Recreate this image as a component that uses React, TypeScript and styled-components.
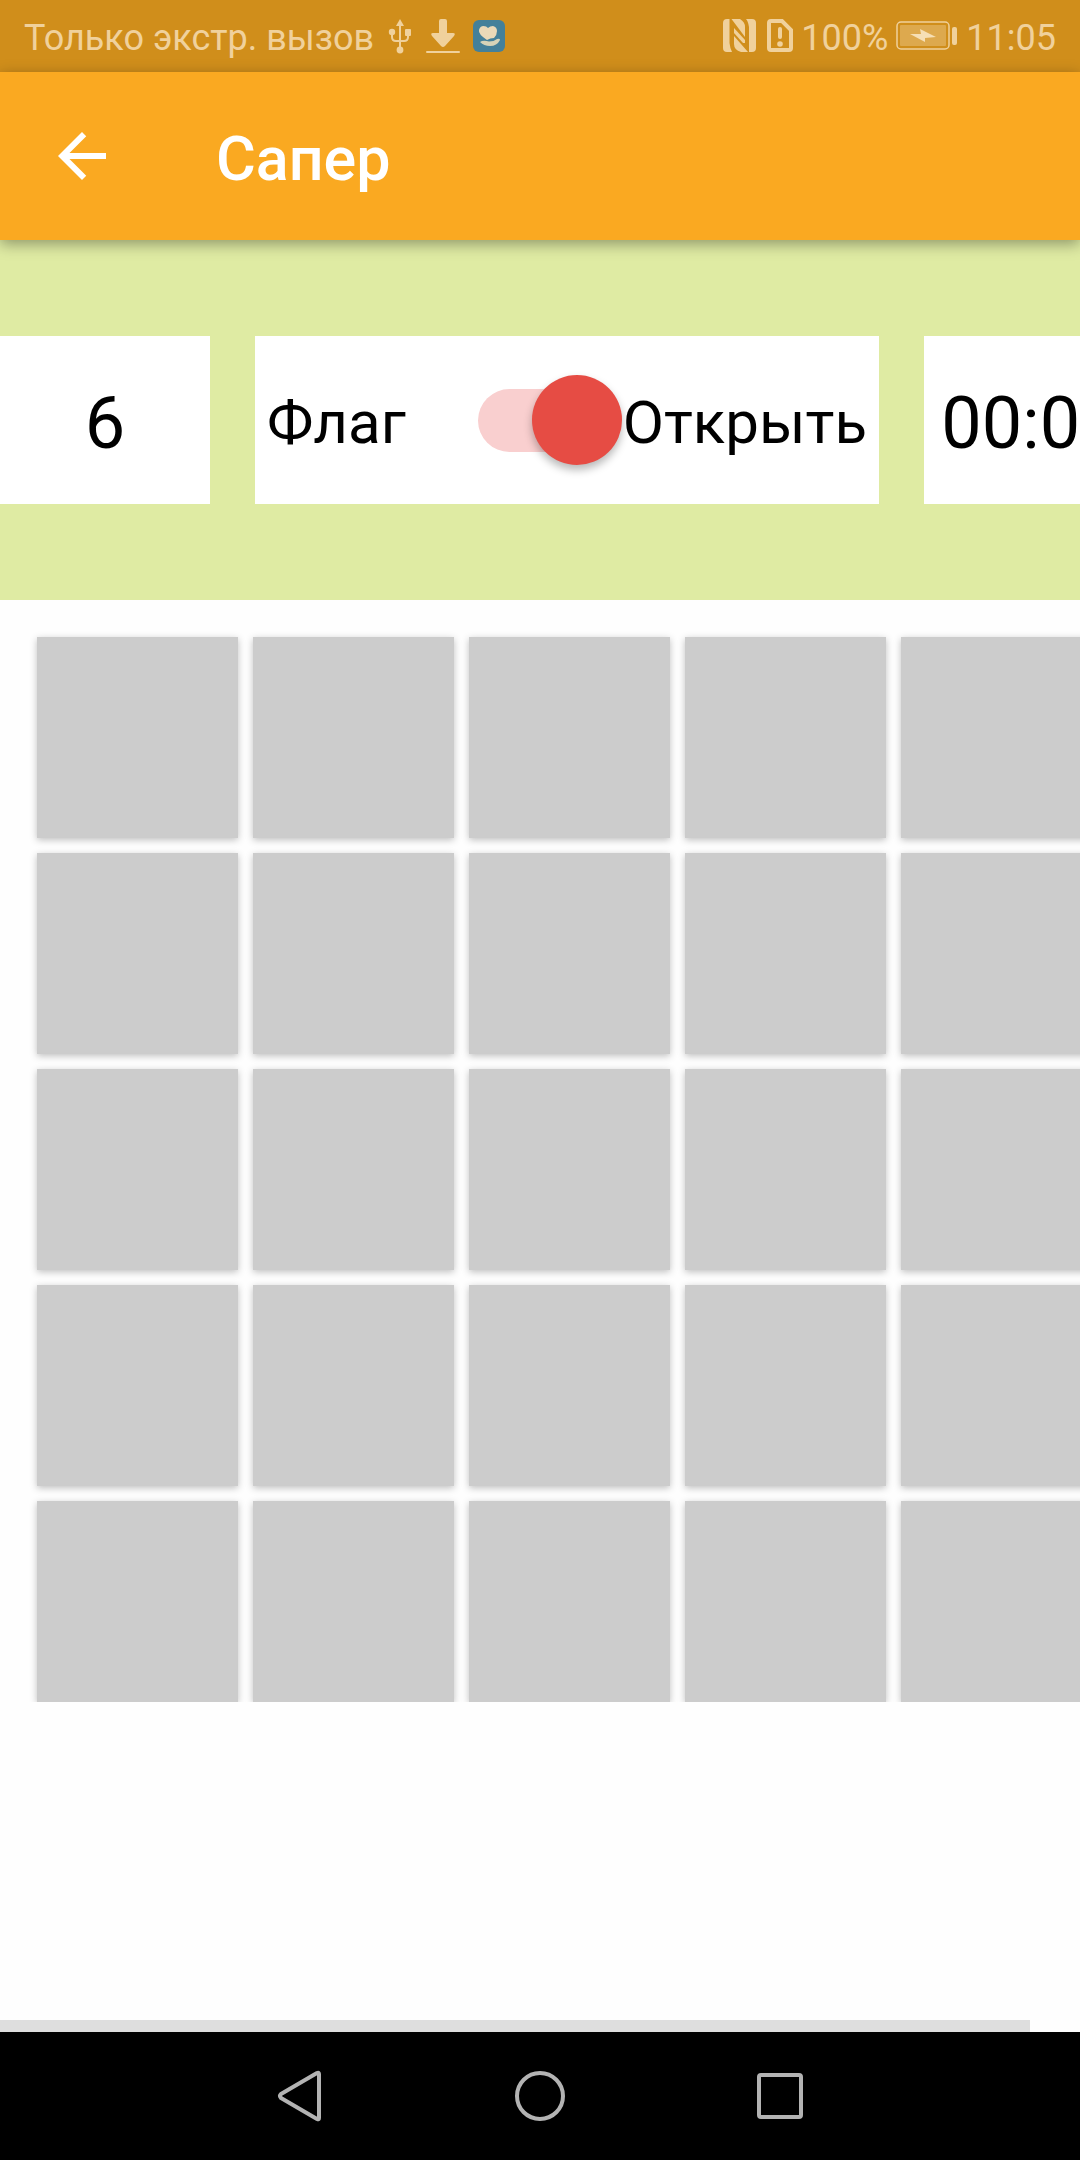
import React, { useState } from "react";
import styled, { createGlobalStyle } from "styled-components";

const GlobalStyle = createGlobalStyle`
  *, *::before { box-sizing: border-box; }
  body {
    margin: 0;
    background: #fefefe;
    font-family: Roboto, "Noto Sans", sans-serif;
    color: #000;
  }
  button { border: 0; padding: 0; background: none; font: inherit; color: inherit; }
`;

const Screen = styled.div`
  display: flex;
  flex-direction: column;
  min-height: 100vh;
  overflow: hidden;
`;

const StatusBar = styled.div`
  display: flex;
  justify-content: space-between;
  align-items: center;
  height: 72px;
  padding: 0 24px;
  background: #d08e1b;
  color: #f0d19c;
  font-size: 36px;
  line-height: 42px;
  white-space: nowrap;
`;

const StatusGroup = styled.div<{ $gap: number }>`
  display: flex;
  align-items: center;
  gap: ${(p) => p.$gap}px;
`;

const StatusText = styled.span`
  padding-top: 3px;
`;

const StatusIcon = styled.svg`
  display: block;
  flex: none;
`;

const AppBar = styled.header`
  position: relative;
  display: flex;
  align-items: center;
  gap: 98px;
  height: 168px;
  padding: 0 46px;
  background: #faa921;
  color: #fff;
  box-shadow: 0 4px 14px rgba(0, 0, 0, 0.36);
`;

const BackButton = styled.button`
  width: 72px;
  height: 72px;
  svg { display: block; }
`;

const Title = styled.h1`
  margin: 0;
  padding-top: 5px;
  font-size: 61px;
  line-height: 72px;
  font-weight: 500;
`;

const Content = styled.main`
  flex: 1;
  display: flex;
  flex-direction: column;
  overflow: hidden;
`;

const InfoBar = styled.section`
  display: flex;
  gap: 45px;
  padding: 96px 0;
  background: #dfeba3;
`;

const Panel = styled.div<{ $width: number }>`
  flex: none;
  display: flex;
  align-items: center;
  width: ${(p) => p.$width}px;
  height: 168px;
  background: #fff;
  white-space: nowrap;
`;

const Counter = styled.output`
  flex: 1;
  padding-top: 8px;
  font-size: 72px;
  line-height: 84px;
  text-align: center;
`;

const ModeLabel = styled.label`
  padding: 5px 12px 0;
  font-size: 60px;
  line-height: 72px;
  input + & { padding-left: 1px; }
`;

const Switch = styled.input`
  appearance: none;
  display: flex;
  align-items: center;
  justify-content: flex-start;
  width: 144px;
  height: 63px;
  margin: 0 0 0 auto;
  border-radius: 32px;
  background: #f9cfcf;
  &::before {
    content: "";
    width: 90px;
    height: 90px;
    flex: none;
    border-radius: 50%;
    background: #e64c44;
    box-shadow: 0 5px 8px rgba(0, 0, 0, 0.28);
  }
  &:checked { justify-content: flex-end; }
`;

const Board = styled.section`
  display: grid;
  grid-template-columns: repeat(5, 201px);
  grid-auto-rows: 201px;
  gap: 15px;
  padding: 37px 37px 0;
  overflow: hidden;
`;

const Cell = styled.button`
  background: #ccc;
  box-shadow: 0 2px 7px rgba(0, 0, 0, 0.25);
`;

const ScrollThumb = styled.div`
  height: 12px;
  margin: auto 50px 0 0;
  background: #dedede;
`;

const NavBar = styled.nav`
  display: flex;
  justify-content: center;
  align-items: center;
  gap: 180px;
  height: 128px;
  background: #000;
`;

const NavButton = styled.button`
  width: 60px;
  height: 60px;
  svg {
    display: block;
    fill: none;
    stroke: #b3b3b3;
    stroke-width: 4;
    stroke-linejoin: round;
  }
`;

const UsbIcon = () => (
  <StatusIcon width="28" height="36" viewBox="-2 0 28 36" fill="currentColor">
    <path d="M12 1 16 8H8Z" />
    <circle cx="12" cy="32" r="3.4" />
    <circle cx="4" cy="14" r="3.2" />
    <rect x="17" y="11" width="6" height="7" rx="1" />
    <path d="M12 6V31M4 15V19Q4 23 8 23H16Q20 23 20 19V16" fill="none" stroke="currentColor" strokeWidth="2" />
  </StatusIcon>
);

const DownloadIcon = () => (
  <StatusIcon width="34" height="36" viewBox="0 0 34 36" fill="currentColor">
    <path d="M13 3Q13 1 15 1H19Q21 1 21 3V15H27Q30 15 28 18L19 28Q17 30 15 28L6 18Q4 15 7 15H13Z" />
    <rect x="0" y="33" width="34" height="2" rx="1" />
  </StatusIcon>
);

const CareIcon = () => (
  <StatusIcon width="34" height="36" viewBox="0 0 34 36">
    <rect x="1" y="2" width="32" height="32" rx="6" fill="#43809a" />
    <path d="M15 22Q6 16 7 12Q8 8 11.500 8Q14.500 8 16 10Q18 8 21 8Q25 9 25 13Q25 17 22 20Q18 20 15 22Z" fill="#ead9b8" />
    <path d="M8 24Q11 22 17 23.500Q22 23.500 25 21Q28 20 28 22Q25 28 18 28Q12 28 8 24Z" fill="#d6d3b8" />
  </StatusIcon>
);

const NfcIcon = () => (
  <StatusIcon width="34" height="34" viewBox="0 0 34 34" fill="currentColor">
    <path d="M6.500 0H4Q0 0 0 4V29Q0 33 4 33H9Q7 29 6.500 24Z" />
    <path d="M8.500 0H17Q22 3 22 8V18Z" />
    <path d="M11 9 22 21V24L20 24 11 14Z" />
    <path d="M11 17 25 33H18Q11 31 11 25Z" />
    <path d="M23 0H29Q33 0 33 4V29Q33 33 29 33H26V8Q25 2 23 0Z" />
  </StatusIcon>
);

const SimAlertIcon = () => (
  <StatusIcon width="28" height="34" viewBox="-2 0 28 34" fill="currentColor">
    <path d="M4 2H15L24 11V29Q24 31 22 31H4Q2 31 2 29V4Q2 2 4 2Z" fill="none" stroke="currentColor" strokeWidth="4" />
    <rect x="11" y="8" width="4" height="12" rx="2" />
    <circle cx="13" cy="25" r="2.800" />
  </StatusIcon>
);

const BatteryIcon = () => (
  <StatusIcon width="62" height="30" viewBox="0 0 62 30" fill="currentColor">
    <rect x="1" y="1" width="52" height="27" rx="4" fill="none" stroke="currentColor" strokeWidth="1.500" />
    <rect x="4" y="4" width="46" height="21" rx="1" opacity="0.4" />
    <path d="M14 13 25 13 24 8 40 16 29 17 29 21Z" fill="#f6dfb5" />
    <rect x="56" y="6" width="5" height="18" rx="2" />
  </StatusIcon>
);

export default function App() {
  const [opening, setOpening] = useState(true);

  return (
    <Screen>
      <GlobalStyle />
      <StatusBar>
        <StatusGroup $gap={12}>
          <StatusText>Только экстр. вызов</StatusText>
          <UsbIcon />
          <DownloadIcon />
          <CareIcon />
        </StatusGroup>
        <StatusGroup $gap={8}>
          <NfcIcon />
          <SimAlertIcon />
          <StatusText>100%</StatusText>
          <BatteryIcon />
          <StatusText>11:05</StatusText>
        </StatusGroup>
      </StatusBar>

      <AppBar>
        <BackButton aria-label="Назад">
          <svg width="72" height="72" viewBox="0 0 24 24" fill="currentColor">
            <path d="M20 11H7.830l5.590-5.590L12 4l-8 8 8 8 1.410-1.410L7.830 13H20v-2z" />
          </svg>
        </BackButton>
        <Title>Сапер</Title>
      </AppBar>

      <Content>
        <InfoBar>
          <Panel $width={210}>
            <Counter>6</Counter>
          </Panel>
          <Panel $width={624}>
            <ModeLabel htmlFor="mode">Флаг</ModeLabel>
            <Switch
              id="mode"
              type="checkbox"
              role="switch"
              checked={opening}
              onChange={(e) => setOpening(e.target.checked)}
            />
            <ModeLabel htmlFor="mode">Открыть</ModeLabel>
          </Panel>
          <Panel $width={214}>
            <Counter>00:00</Counter>
          </Panel>
        </InfoBar>

        <Board>
          {Array.from({ length: 25 }, (_, i) => (
            <Cell key={i} aria-label={`Клетка ${i + 1}`} />
          ))}
        </Board>

        <ScrollThumb />
      </Content>

      <NavBar>
        <NavButton aria-label="Назад">
          <svg width="60" height="60" viewBox="0 0 60 60">
            <path d="M49 8Q49 6 47 7L11 28Q9 30 11 32L47 53Q49 54 49 52Z" />
          </svg>
        </NavButton>
        <NavButton aria-label="Домой">
          <svg width="60" height="60" viewBox="0 0 60 60">
            <circle cx="30" cy="30" r="23" />
          </svg>
        </NavButton>
        <NavButton aria-label="Недавние">
          <svg width="60" height="60" viewBox="0 0 60 60">
            <rect x="9" y="9" width="42" height="42" rx="2" />
          </svg>
        </NavButton>
      </NavBar>
    </Screen>
  );
}
